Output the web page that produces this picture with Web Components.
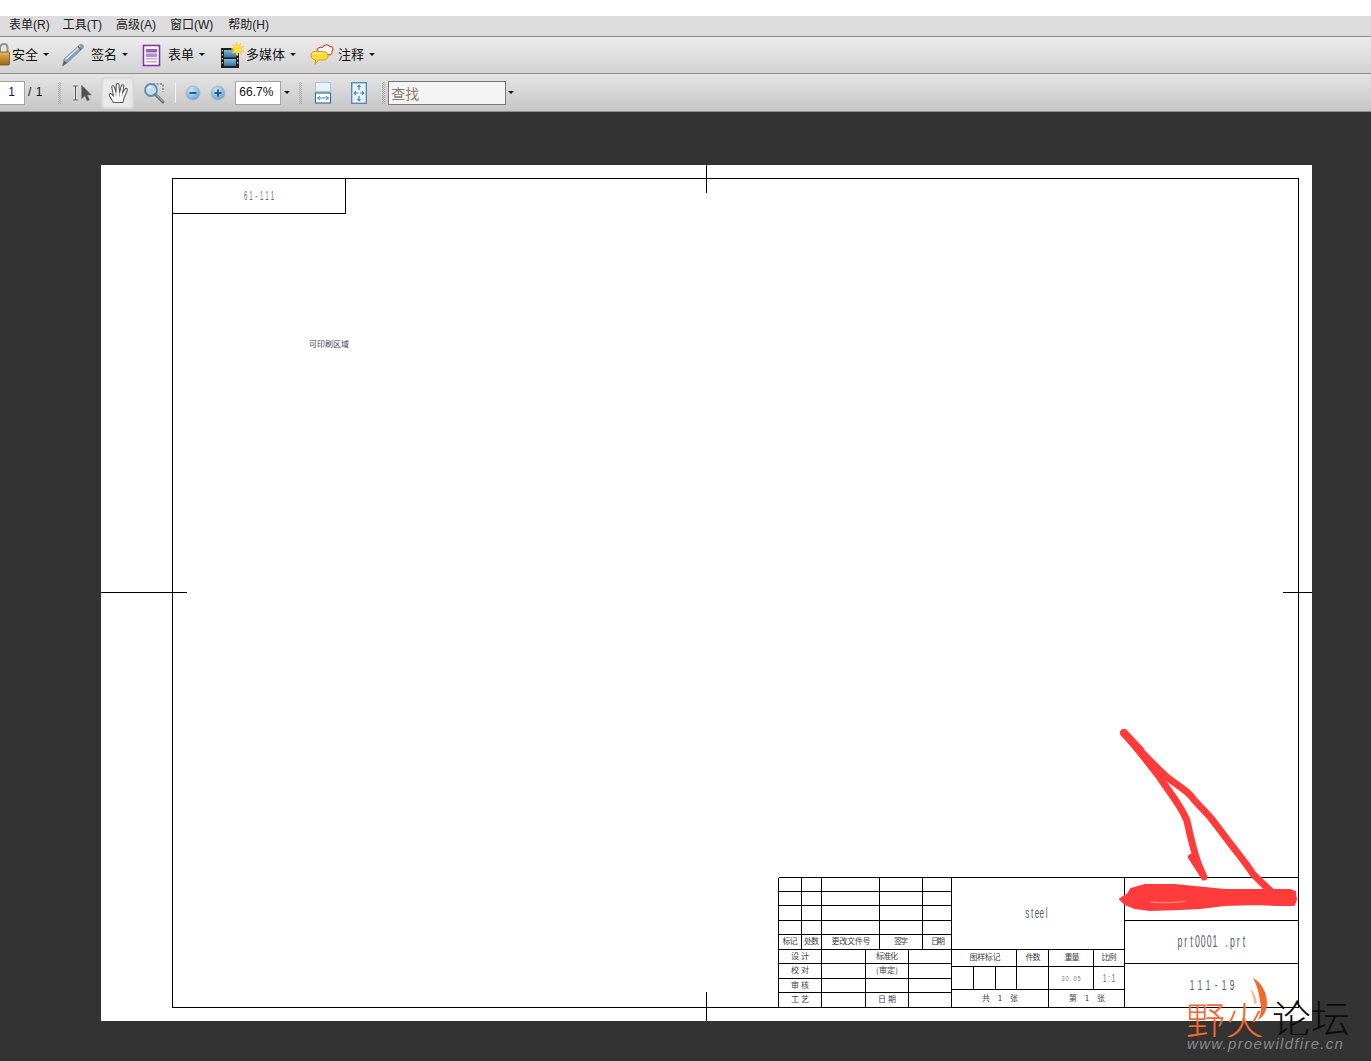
<!DOCTYPE html>
<html lang="zh">
<head>
<meta charset="utf-8">
<title>PDF</title>
<style>
html,body{margin:0;padding:0;background:#333;height:1061px;overflow:hidden}
body{font-family:"Noto Sans CJK SC","Liberation Sans",sans-serif;color:#111}
</style>
</head>
<body>
<viewer-app></viewer-app>
<script>
const UI='"Liberation Sans","Noto Sans CJK SC",sans-serif';
const ICONS={
lock:[15,24,`<defs><linearGradient id="g" x1="0" y1="0" x2="0" y2="1"><stop offset="0" stop-color="#e8b85a"/><stop offset="1" stop-color="#9a6414"/></linearGradient></defs><path d="M3 9V5.500C3 2.500 5 1 7 1s3.500 1.500 3.500 4V9" fill="none" stroke="#8f8f8f" stroke-width="2"/><rect x="0" y="9" width="12.500" height="13" rx="1" fill="url(#g)" stroke="#7a5414" stroke-width=".8"/>`],
pen:[26,24,`<defs><linearGradient id="g" x1="0" y1="0" x2="1" y2="1"><stop offset="0" stop-color="#a9c4da"/><stop offset="1" stop-color="#5f7f9b"/></linearGradient></defs><path d="M1.500 23 3 16 19 1.500c1.500-1.200 4.500 1.200 3 3.500L6 20z" fill="url(#g)" stroke="#8a8d91" stroke-width=".8"/><path d="M4.500 16.500 19 3.500" stroke="#dbe8f2" stroke-width="1.400"/><path d="M17 3.500l3 3" stroke="#4d6a84" stroke-width="1.200"/><path d="M1.500 23 3 18l3 2z" fill="#5b5f63"/>`],
form:[20,23,`<rect x="1.500" y="1.500" width="16" height="20" fill="#fff" stroke="#8b32a8" stroke-width="1.600"/><rect x="4" y="5" width="11" height="3.500" fill="#9b60b8"/><rect x="4" y="9.500" width="11" height="3.500" fill="#b48ccb"/><rect x="4" y="14" width="11" height="1.500" fill="#c3a6d4"/><rect x="4" y="17" width="11" height="1.500" fill="#c3a6d4"/>`],
media:[25,27,`<defs><linearGradient id="g" x1="0" y1="0" x2="0" y2="1"><stop offset="0" stop-color="#8dbbd6"/><stop offset="1" stop-color="#2f7199"/></linearGradient></defs><rect x="1" y="6" width="18" height="20" fill="#1d1d1d"/><rect x="4" y="8" width="12" height="7.500" fill="url(#g)"/><rect x="4" y="17" width="12" height="7" fill="url(#g)"/><g fill="#e8e8e8"><rect x="1.800" y="8" width="1.200" height="1.500"/><rect x="1.800" y="12" width="1.200" height="1.500"/><rect x="1.800" y="16" width="1.200" height="1.500"/><rect x="1.800" y="20" width="1.200" height="1.500"/><rect x="17" y="12" width="1.200" height="1.500"/><rect x="17" y="16" width="1.200" height="1.500"/><rect x="17" y="20" width="1.200" height="1.500"/></g><path d="M16.500 0l1.500 3.500 2.500-2-.5 3.500 4-.5-3 2.500 3 2-3.500.5 1 3.500-3-2.200-2 3-.8-3.500-3.500 1 2-3-3.200-1.300 3.200-1.200-1.500-3.200 3 1.200z" fill="#ffe23c" stroke="#e9b92a" stroke-width=".4"/>`],
comment:[24,24,`<path d="M7 8c0-3 3-4.500 5.500-3.500C14 1.500 18 1 19.500 3.500 22.500 3 24 6 22 8.500c1 2.500-2 4-4 3H9C7 11.500 6.500 9.500 7 8z" fill="#fff" stroke="#e0473d" stroke-width="1.200"/><path d="M1 12.500C1 9.500 3 8.500 5.500 8.500h8c2.500 0 4.500 1 4.500 4s-2 4.500-4.500 4.500H8.500L5 21.500l.5-4.500C3 16.800 1 15 1 12.500z" fill="#ffd83a" stroke="#d89a18" stroke-width="1"/><path d="M3 11.500c1-1.200 2-1.300 3-1.300h7" stroke="#fff2a8" stroke-width="1.300" fill="none"/>`],
select:[21,18,`<path d="M1 2h5M1 16h5M3.500 2v14" stroke="#fff" stroke-width="2.600" fill="none" opacity=".7"/><path d="M1 2h5M1 16h5M3.500 2v14" stroke="#555" stroke-width="1.100" fill="none"/><path d="M9.500 1v14l3.300-3 2.300 5 2.500-1-2.300-5H19.500z" fill="#505050" stroke="#8a8a8a" stroke-width=".6"/>`],
hand:[22,22,`<path d="M6.500 20.500 2.500 14c-1-1.800.8-3 2.200-1.800L6.500 14 4.800 5.500c-.4-2 2-2.500 2.600-.6L9 10.500 9.200 3c0-2 2.700-2 2.800 0l.5 7.500L14.300 4c.5-1.900 2.900-1.400 2.500.5L15.500 11l2.300-3.800c1-1.600 3.200-.5 2.400 1.300L17 16l-1 4.500z" fill="#fff" stroke="#5a5a5a" stroke-width="1.100" stroke-linejoin="round"/><path d="M9 10.500v4M12.500 10.500v4M15.500 11l-.5 3.500" stroke="#9a9a9a" stroke-width=".8"/>`],
marquee:[22,22,`<path d="M10 2h10v8" fill="none" stroke="#555" stroke-width="1" stroke-dasharray="2 1.500"/><circle cx="8" cy="8" r="6" fill="#c2dcec" stroke="#5d90b4" stroke-width="1.800"/><path d="M5 6.500c1-1.500 2.500-2 4-1.800" stroke="#fff" stroke-width="1.200" fill="none"/><path d="M12.500 12.500 20 20" stroke="#6e6e6e" stroke-width="3" stroke-linecap="round"/><path d="M13 12.500 20 19.500" stroke="#c4c4c4" stroke-width="1"/>`],
minus:[16,16,`<defs><radialGradient id="g" cx=".4" cy=".3" r=".8"><stop offset="0" stop-color="#cfe3f3"/><stop offset="1" stop-color="#5f9ccb"/></radialGradient></defs><circle cx="8" cy="8" r="7" fill="url(#g)" stroke="#9fb3c2" stroke-width=".8"/><rect x="4.500" y="7" width="7" height="2" fill="#1d5f9a"/>`],
plus:[16,16,`<defs><radialGradient id="g" cx=".4" cy=".3" r=".8"><stop offset="0" stop-color="#cfe3f3"/><stop offset="1" stop-color="#5f9ccb"/></radialGradient></defs><circle cx="8" cy="8" r="7" fill="url(#g)" stroke="#9fb3c2" stroke-width=".8"/><path d="M4.500 7h2.500V4.500h2V7h2.500v2H9v2.500H7V9H4.500z" fill="#1d5f9a"/>`],
fitw:[16,22,`<rect x=".5" y=".5" width="15" height="9" fill="#e9f1f7" stroke="#a9c4d8"/><rect x=".5" y="11" width="15" height="10" fill="#fff" stroke="#3f7199" stroke-width="1.200"/><path d="M2.500 16h11M2.500 16l2.500-2M2.500 16l2.500 2M13.500 16 11 14M13.500 16 11 18" fill="none" stroke="#4a86b5" stroke-width="1"/>`],
fitp:[16,22,`<rect x=".7" y=".7" width="14.600" height="20.600" fill="#e6f1f9" stroke="#4f87ad" stroke-width="1.300"/><path d="M8 3v5M8 14v5M3 11h4M9 11h4" stroke="#3f8ac6" stroke-width="1.200"/><path d="M8 2.500 5.800 5h4.400zM8 19.500 5.800 17h4.400zM2.500 11 5 8.800v4.400zM13.500 11 11 8.800v4.400z" fill="#3f8ac6"/>`]
};
class ToolIcon extends HTMLElement{
  constructor(){super();this.attachShadow({mode:'open'})}
  connectedCallback(){
    const [w,h,body]=ICONS[this.getAttribute('name')];
    this.shadowRoot.innerHTML=`<style>:host{display:inline-flex;flex:none;line-height:0}svg{display:block;overflow:visible}</style><svg width="${w}" height="${h}" viewBox="0 0 ${w} ${h}">${body}</svg>`;
  }
}
customElements.define('tool-icon',ToolIcon);

class DropCaret extends HTMLElement{
  constructor(){super();this.attachShadow({mode:'open'}).innerHTML=`<style>:host{display:inline-block;flex:none;width:0;height:0;border:3px solid transparent;border-top:3px solid #111;border-bottom:0;margin-bottom:1px}</style>`}
}
customElements.define('drop-caret',DropCaret);

class ToolGrip extends HTMLElement{
  constructor(){super();this.attachShadow({mode:'open'}).innerHTML=`<style>:host{display:block;flex:none;width:3px;height:22px;opacity:.75;background:conic-gradient(#9a9a9a 25%,transparent 0 50%,#9a9a9a 0 75%,transparent 0) 0 0/2px 2px}</style>`}
}
customElements.define('tool-grip',ToolGrip);

class MenuBar extends HTMLElement{
  constructor(){super();this.attachShadow({mode:'open'}).innerHTML=`<style>
  :host{display:flex;align-items:center;gap:14px;height:20px;padding:0 0 2px 9px;box-sizing:border-box;background:#dcdcdc;font:12px/18px ${UI};color:#1a1a1a;white-space:nowrap}
  </style><slot></slot>`}
}
customElements.define('menu-bar',MenuBar);

class ToolBar extends HTMLElement{
  constructor(){super();this.attachShadow({mode:'open'}).innerHTML=`<style>
  :host{display:flex;align-items:center;overflow:hidden;box-sizing:border-box;white-space:nowrap;font:13px ${UI};color:#111;border-top:1px solid #8c8c8c;background:linear-gradient(#ececec,#d2d2d2)}
  :host([row="1"]){height:37px}
  :host([row="2"]){height:38px;border-bottom:1px solid #8e8e8e;background:linear-gradient(#e4e4e4,#c6c6c6)}
  </style><slot></slot>`}
}
customElements.define('tool-bar',ToolBar);

class ToolItem extends HTMLElement{
  constructor(){super();this.attachShadow({mode:'open'}).innerHTML=`<style>
  :host{display:inline-flex;align-items:center;flex:none}
  .l{margin-left:var(--ml,4px);margin-right:var(--mr,5px);padding-bottom:4px}
  </style><slot name="icon"></slot><span class="l"><slot></slot></span><drop-caret></drop-caret>`}
}
customElements.define('tool-item',ToolItem);

class ToolField extends HTMLElement{
  constructor(){super();this.attachShadow({mode:'open'}).innerHTML=`<style>
  :host{display:flex;align-items:center;flex:none;box-sizing:border-box;height:24px;background:#fff;border:1px solid #a4a4a4;font:12px ${UI};color:#111;padding:0 3px 1px}
  :host([search]){background:#f4f4f4;border:1px solid #777;color:#8a7f6c;font-size:14px;padding:0 2px;height:24px}
  </style><slot></slot>`}
}
customElements.define('tool-field',ToolField);

class ToolPress extends HTMLElement{
  constructor(){super();this.attachShadow({mode:'open'}).innerHTML=`<style>
  :host{display:flex;align-items:center;justify-content:center;flex:none;width:33px;height:32px;box-sizing:border-box;border-radius:3px;background:#e9e9e9;border:1px solid #d6d6d6;box-shadow:inset 0 0 2px #bdbdbd}
  </style><slot></slot>`}
}
customElements.define('tool-press',ToolPress);

class DrawingSheet extends HTMLElement{
  constructor(){super();this.attachShadow({mode:'open'})}
  connectedCallback(){
    const L=[];const line=(a,b,c,d)=>L.push(`<line x1="${a}" y1="${b}" x2="${c}" y2="${d}"/>`);
    const H=(y,a,b)=>line(a,y,b,y), V=(x,a,b)=>line(x,a,x,b);
    L.push('<rect x="172.500" y="178.500" width="1126" height="829" fill="none"/>');
    H(213.500,172.500,345.500);V(345.500,178.500,213.500);
    V(706.500,165,192.500);V(706.500,992,1021);H(592.500,101,187);H(592.500,1283,1312);
    const x0=778.500,x1=951.500,x2=1124.500,x3=1298.500;
    H(877.500,x0,x3);V(x0,877.500,1007.500);V(x1,877.500,1007.500);V(x2,877.500,1007.500);
    [891.500,905.500,920.500,934.500,949.500].forEach(y=>H(y,x0,x1));
    [801.500,821.500,879.500,922.500].forEach(x=>V(x,877.500,949.500));
    [963.500,978.500,992.500].forEach(y=>H(y,x0,x1));
    [821.500,865.500,908.500].forEach(x=>V(x,949.500,1007.500));
    H(949.500,x1,x2);H(966.500,x1,x2);H(989.500,x1,x2);
    [1016.500,1093.500].forEach(x=>V(x,949.500,989.500));V(1048.500,949.500,1007.500);
    [973.500,995.500].forEach(x=>V(x,966.500,989.500));
    H(920.500,x2,x3);H(963.500,x2,x3);
    const T=[];
    const zh=(x,y,s,w)=>T.push(`<text class="z" x="${x}" y="${y}" textLength="${w}" lengthAdjust="spacing">${s}</text>`);
    // monospaced, narrow, tall glyphs: each glyph centred on its own pitch cell
    const mo=(cx,y,s,w,fs,sx,fill)=>{
      const p=w/s.length,xs=[...s].map((_,i)=>((cx-w/2+p*(i+.5))/sx).toFixed(2)).join(' ');
      T.push(`<text class="m" xml:space="preserve" transform="scale(${sx},1)" x="${xs}" y="${y}" font-size="${fs}" fill="${fill||'#565a72'}">${s}</text>`);
    };
    mo(259,200,'61-111',32,12,.5,'#6a6f88');
    zh(329,346.500,'可印刷区域',40);
    mo(1037,918,'steel',24,15,.55);
    mo(1212,947,'prt0001 .prt',70,16,.55);
    mo(1212,990,'111-19',48,15,.55);
    mo(1071,981,'30.05',20,8,.7,'#777');
    mo(1109,982,'1:1',13,10,.6,'#666');
    zh(790,944,'标记',15);zh(811.500,944,'处数',15);zh(851,944,'更改文件号',39);zh(901,944,'签字',14);zh(938,944,'日期',14);
    zh(800,959,'设 计',18);zh(887,959,'标准化',22);
    zh(800,973,'校 对',18);zh(887,973,'(审定)',22);
    zh(800,988,'审 核',18);
    zh(800,1002,'工 艺',18);zh(887,1002,'日 期',18);
    zh(985,960,'图样标记',31);zh(1033,960,'件数',15);zh(1072,960,'重量',15);zh(1109,960,'比例',15);
    zh(1000,1001,'共 1 张',36);zh(1087,1001,'第 1 张',36);
    this.shadowRoot.innerHTML=`<style>
    :host{display:block;flex:none;width:1211px;height:856px;background:#fff}
    svg{display:block}
    .l line,.l rect{stroke:#000;stroke-width:1;shape-rendering:crispEdges}
    text{text-anchor:middle}
    .z{font:8px "Noto Sans CJK SC",sans-serif;fill:#3d3d4a}
    .m{font-family:"Liberation Sans",sans-serif}
    </style><svg width="1211" height="856" viewBox="101 165 1211 856"><g class="l">${L.join('')}</g><g>${T.join('')}</g></svg>`;
  }
}
customElements.define('drawing-sheet',DrawingSheet);

class RedMark extends HTMLElement{
  constructor(){super();this.attachShadow({mode:'open'}).innerHTML=`<style>
  :host{position:absolute;left:1100px;top:720px;width:220px;height:200px;pointer-events:none}
  svg{display:block;overflow:visible}
  </style><svg width="220" height="200" viewBox="1100 720 220 200">
  <g fill="none" stroke="#ff3b3b" stroke-linecap="round" stroke-linejoin="round">
  <path stroke-width="7" d="M1124 733C1135 746 1148 762 1160 778 1170 793 1182 807 1187 821 1190 835 1193 848 1197 860 1199 867 1202 872 1204 877"/>
  <path stroke-width="6" d="M1191 857 1204 877"/>
  <path stroke-width="8" d="M1124 733 1140 750"/>
  <path stroke-width="7" d="M1124 733C1135 745 1150 762 1168 778 1177 785 1186 790 1191 796 1197 804 1204 810 1210 817 1218 827 1226 838 1233 847 1240 856 1248 866 1253 874 1260 881 1267 888 1273 893"/>
  </g>
  <path fill="#ff3b3b" stroke="#ff3b3b" stroke-width="2" stroke-linejoin="round" d="M1120 899 1128 894 1131 889 1145 885 1175 885 1205 888 1225 890 1260 890 1290 890 1295 892 1296 900 1294 905 1275 905 1255 904 1225 905 1200 908 1180 909 1150 910 1135 908 1125 904z"/>
  <path d="M1150 902c12 1 26 1 36-1" stroke="#ffb3b3" stroke-width="1" fill="none" opacity=".8"/>
  </svg>`}
}
customElements.define('red-mark',RedMark);

class ForumWatermark extends HTMLElement{
  constructor(){super();this.attachShadow({mode:'open'}).innerHTML=`<style>
  :host{position:absolute;left:1180px;top:975px;width:185px;height:82px;pointer-events:none}
  .z{position:absolute;display:block;height:38px;overflow:hidden;font:300 39px/38px "Noto Sans CJK SC",sans-serif;white-space:nowrap}
  .a{left:6px;top:24px;color:#f4692e}
  .b{left:92px;top:22px;color:#0c0c0c}
  .u{position:absolute;left:7px;top:60px;font:italic 15px/18px "Liberation Sans",sans-serif;letter-spacing:1.3px;color:#8a8a8a;white-space:nowrap}
  svg{position:absolute;left:0;top:0;overflow:visible}
  </style>
  <span class="z a">野火</span><span class="z b">论坛</span><span class="u">www.proewildfire.cn</span>
  <svg width="185" height="60" viewBox="1180 975 185 60"><path d="M1253 978c9 5 14 15 14 25 0 8-4 14-9 17 3-6 4-12 2-19-1-8-3-16-7-23z" fill="#f4692e"/><path d="M1250 988c4 4 6 9 7 15l-3 1c0-6-2-11-4-16z" fill="#fbb68f"/></svg>`}
}
customElements.define('forum-watermark',ForumWatermark);

class DocViewer extends HTMLElement{
  constructor(){super();this.attachShadow({mode:'open'}).innerHTML=`<style>
  :host{display:flex;box-sizing:border-box;height:950px;padding:53px 0 0 101px;background:#333}
  </style><slot></slot>`}
}
customElements.define('doc-viewer',DocViewer);

class ViewerApp extends HTMLElement{
  constructor(){super();this.attachShadow({mode:'open'}).innerHTML=`<style>
  :host{display:block;position:relative;width:1371px;height:1061px;overflow:hidden}
  .top{height:16px;background:#fff}
  </style>
  <div class="top"></div>
  <menu-bar><span style="margin-right:-1px">表单(R)</span><span>工具(T)</span><span>高级(A)</span><span style="margin-right:1px">窗口(W)</span><span>帮助(H)</span></menu-bar>
  <tool-bar row="1">
    <tool-item style="margin-left:-3px;--ml:0px"><tool-icon slot="icon" name="lock"></tool-icon>安全</tool-item>
    <tool-item style="margin-left:12px"><tool-icon slot="icon" name="pen"></tool-icon>签名</tool-item>
    <tool-item style="margin-left:14px;--ml:6px"><tool-icon slot="icon" name="form"></tool-icon>表单</tool-item>
    <tool-item style="margin-left:15px;--ml:1px"><tool-icon slot="icon" name="media"></tool-icon>多媒体</tool-item>
    <tool-item style="margin-left:14px;--ml:4px"><tool-icon slot="icon" name="comment"></tool-icon>注释</tool-item>
  </tool-bar>
  <tool-bar row="2" style="height:39px">
    <tool-field style="width:27px;margin-left:-2px;justify-content:center;color:#2a0a5a">1</tool-field>
    <span style="margin-left:3px;font-size:12px;word-spacing:1px;padding-bottom:2px">/ 1</span>
    <tool-grip style="margin-left:16px"></tool-grip>
    <tool-icon name="select" style="margin-left:11px"></tool-icon>
    <tool-press style="margin-left:8px"><tool-icon name="hand"></tool-icon></tool-press>
    <tool-icon name="marquee" style="margin-left:9px"></tool-icon>
    <div style="width:1px;height:20px;background:#f2f2f2;margin-left:10px;flex:none"></div>
    <tool-icon name="minus" style="margin-left:9px"></tool-icon>
    <tool-icon name="plus" style="margin-left:9px"></tool-icon>
    <tool-field style="width:46px;margin-left:9px">66.7%</tool-field>
    <drop-caret style="margin-left:3px"></drop-caret>
    <tool-grip style="margin-left:9px"></tool-grip>
    <tool-icon name="fitw" style="margin-left:13px"></tool-icon>
    <tool-icon name="fitp" style="margin-left:20px"></tool-icon>
    <tool-grip style="margin-left:15px"></tool-grip>
    <tool-field search style="width:118px;margin-left:3px">查找</tool-field>
    <drop-caret style="margin-left:2px"></drop-caret>
  </tool-bar>
  <doc-viewer><drawing-sheet></drawing-sheet></doc-viewer>
  <red-mark></red-mark>
  <forum-watermark></forum-watermark>`}
}
customElements.define('viewer-app',ViewerApp);
</script>
</body>
</html>
